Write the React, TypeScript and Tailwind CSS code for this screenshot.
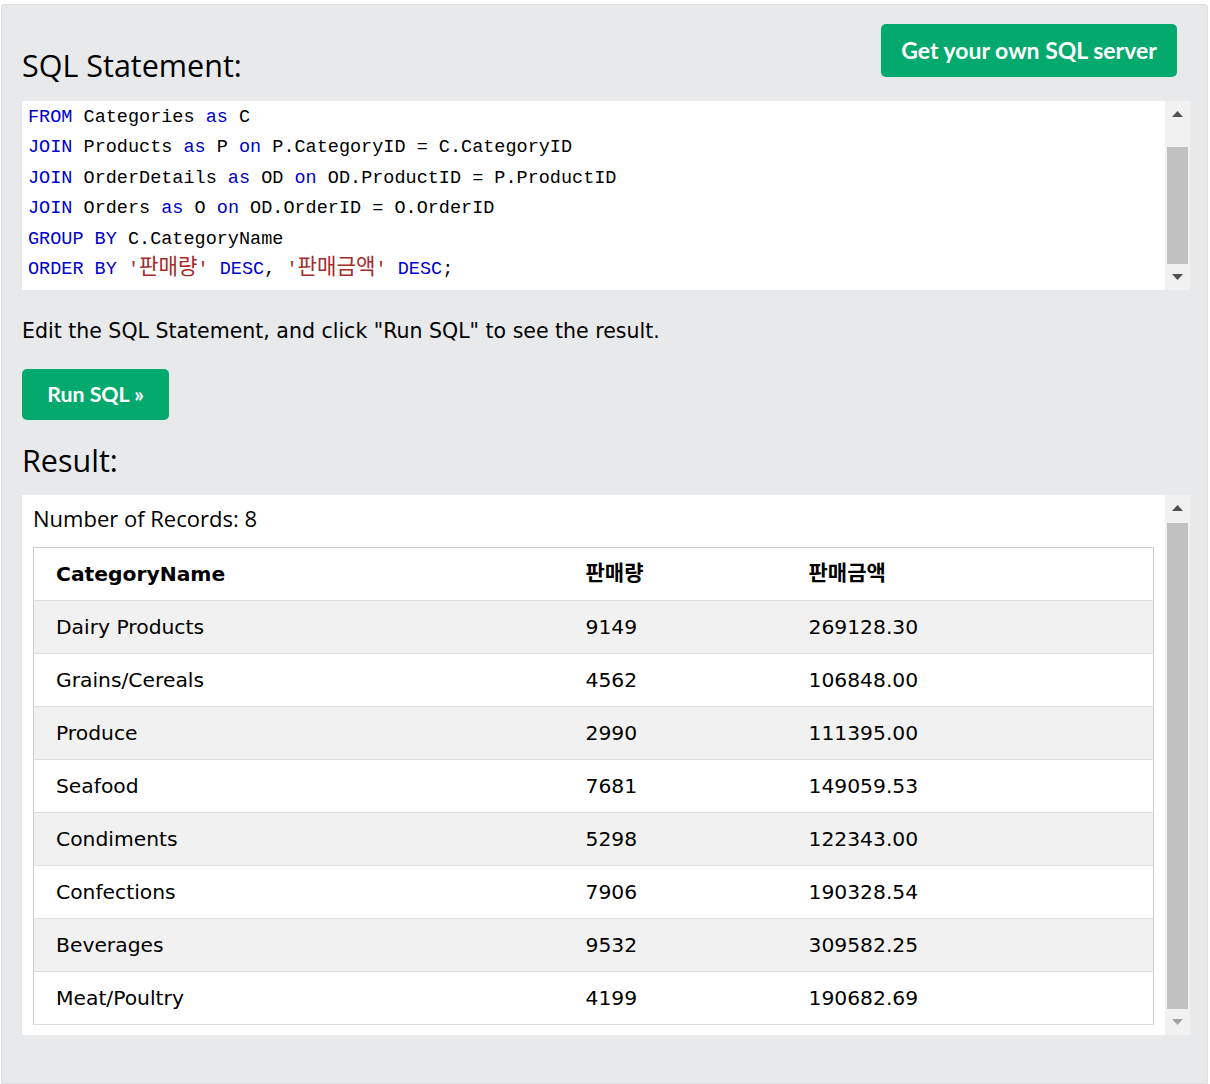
import React from "react";

const kw = "text-[#0000cd]";
const str = "text-[#a52a2a]";
const ko = "text-[21.2px] leading-none";

const rows: [string, string, string][] = [
    ["Dairy Products", "9149", "269128.30"],
    ["Grains/Cereals", "4562", "106848.00"],
    ["Produce", "2990", "111395.00"],
    ["Seafood", "7681", "149059.53"],
    ["Condiments", "5298", "122343.00"],
    ["Confections", "7906", "190328.54"],
    ["Beverages", "9532", "309582.25"],
    ["Meat/Poultry", "4199", "190682.69"],
];

function Scrollbar({ gap, downDim }: { gap: string; downDim?: boolean }) {
    return (
        <div className="w-[25px] shrink-0 bg-[#f1f1f1] flex flex-col items-center">
            <div className="w-full h-[26px] flex justify-center items-center">
                <svg width="11" height="6" viewBox="0 0 11 6">
                    <path d="M0 6 L5.5 0 L11 6 Z" fill="#505050" />
                </svg>
            </div>
            <div className={gap} />
            <div className="flex-1 w-[21px] bg-[#c1c1c1]" />
            <div className="w-full h-[26px] flex justify-center items-center">
                <svg width="11" height="6" viewBox="0 0 11 6">
                    <path d="M0 0 L11 0 L5.5 6 Z" fill={downDim ? "#a3a3a3" : "#505050"} />
                </svg>
            </div>
        </div>
    );
}

export default function App() {
    const heading = "font-['Open_Sans','Noto_Sans',sans-serif] text-[30.5px] leading-[40px] text-black";
    const verdana = "font-['DejaVu_Sans','Noto_Sans_CJK_KR',sans-serif]";
    const btn = "bg-[#04aa6d] text-white font-['Lato','Noto_Sans',sans-serif] font-bold rounded-[5px] flex items-center justify-center";

    return (
        <div className="min-h-screen bg-white pt-1 pl-px">
            <div className="w-[1207px] min-h-[1080px] rounded-t-[3px] border border-[#dcdddf] bg-[#e7e9eb] pl-5 pr-[17px] pt-[19px] pb-12">
                {/* header */}
                <div className="flex justify-between items-start mb-4">
                    <h2 className={`${heading} mt-[21px]`}>SQL Statement:</h2>
                    <button className={`${btn} h-[53px] w-[296px] mr-[13px] text-[23px]`}>Get your own SQL server</button>
                </div>

                {/* code box */}
                <div className="flex bg-white h-[189px]">
                    <pre className="flex-1 pl-1.5 pt-[2px] font-['Liberation_Mono','Noto_Sans_CJK_KR',monospace] text-[18.5px] leading-[30.4px] text-black">
                        <div><span className={kw}>FROM</span> Categories <span className={kw}>as</span> C</div>
                        <div><span className={kw}>JOIN</span> Products <span className={kw}>as</span> P <span className={kw}>on</span> P.CategoryID = C.CategoryID</div>
                        <div><span className={kw}>JOIN</span> OrderDetails <span className={kw}>as</span> OD <span className={kw}>on</span> OD.ProductID = P.ProductID</div>
                        <div><span className={kw}>JOIN</span> Orders <span className={kw}>as</span> O <span className={kw}>on</span> OD.OrderID = O.OrderID</div>
                        <div><span className={kw}>GROUP BY</span> C.CategoryName</div>
                        <div>
                            <span className={kw}>ORDER BY</span> <span className={str}>'<span className={ko}>판매량</span>'</span>{" "}
                            <span className={kw}>DESC</span>, <span className={str}>'<span className={ko}>판매금액</span>'</span>{" "}
                            <span className={kw}>DESC</span>;
                        </div>
                    </pre>
                    <Scrollbar gap="h-[20px]" />
                </div>

                <p className={`${verdana} mt-[28px] text-[20.5px] leading-[26px] text-black`}>
                    Edit the SQL Statement, and click "Run SQL" to see the result.
                </p>

                <button className={`${btn} mt-[25px] h-[51px] w-[147px] text-[21.3px]`}>Run SQL »</button>

                <h2 className={`${heading} mt-5`}>Result:</h2>

                {/* result box */}
                <div className="mt-[15px] flex bg-white h-[540px]">
                    <div className="flex-1 px-[11px] pt-[10px]">
                        <div className="font-['Open_Sans','Noto_Sans',sans-serif] text-[22px] leading-[26px] text-black mb-4">
                            Number of Records: 8
                        </div>
                        <table className={`${verdana} table-fixed w-full border border-[#cccccc] border-collapse text-[20.3px] text-black`}>
                            <thead>
                                <tr className="h-[53px] border-b border-[#dddddd] bg-white">
                                    <th className="w-[552px] pl-[22px] text-left font-bold">CategoryName</th>
                                    <th className="w-[223px] text-left font-bold text-[21px]">판매량</th>
                                    <th className="text-left font-bold text-[21px]">판매금액</th>
                                </tr>
                            </thead>
                            <tbody>
                                {rows.map((r, i) => (
                                    <tr key={r[0]} className={`h-[53px] border-b border-[#dddddd] ${i % 2 === 0 ? "bg-[#f1f1f1]" : "bg-white"}`}>
                                        <td className="pl-[22px]">{r[0]}</td>
                                        <td>{r[1]}</td>
                                        <td>{r[2]}</td>
                                    </tr>
                                ))}
                            </tbody>
                        </table>
                    </div>
                    <Scrollbar gap="h-[2px]" downDim />
                </div>
            </div>
        </div>
    );
}
